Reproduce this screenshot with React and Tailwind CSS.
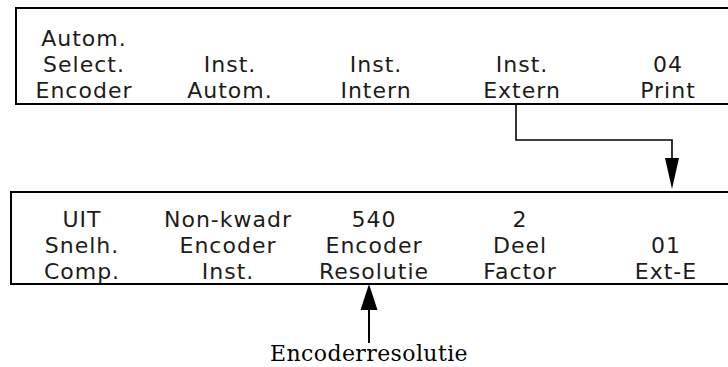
import React from "react";

const top = [
  ["Autom.", "Select.", "Encoder"],
  ["", "Inst.", "Autom."],
  ["", "Inst.", "Intern"],
  ["", "Inst.", "Extern"],
  ["", "04", "Print"],
];

const bottom = [
  ["UIT", "Snelh.", "Comp."],
  ["Non-kwadr", "Encoder", "Inst."],
  ["540", "Encoder", "Resolutie"],
  ["2", "Deel", "Factor"],
  ["", "01", "Ext-E"],
];

function Cols({ data }) {
  return data.map((col, i) => (
    <div key={i} className="flex flex-col">
      {col.map((t, j) => (
        <span key={j} className="whitespace-nowrap">
          {t === "" ? "\u00a0" : t}
        </span>
      ))}
    </div>
  ));
}

export default function App() {
  return (
    <div className="w-[728px] h-[367px] overflow-hidden bg-white">
      <div className="mt-[7px] ml-[15px] border-t-2 border-l-2 border-b-2 border-black pt-[17px]">
        <div className="-mb-px -ml-[6px] grid grid-cols-[repeat(5,146px)] text-center text-[22px] leading-[26px] tracking-[1px] text-[#1c1c1c] font-['DejaVu_Sans',sans-serif]">
          <Cols data={top} />
        </div>
      </div>

      <svg className="block" width="728" height="86" viewBox="0 0 728 86">
        <path d="M516 0 V35 H672 V55" fill="none" stroke="#000" strokeWidth="1.6" />
        <polygon points="665,53 679,53 672,84" fill="#000" />
      </svg>

      <div className="ml-[10px] border-t-2 border-l-2 border-b-2 border-black pt-[14px]">
        <div className="-mb-[2px] -ml-[3px] grid grid-cols-[repeat(5,146px)] text-center text-[22px] leading-[26px] tracking-[1px] text-[#1c1c1c] font-['DejaVu_Sans',sans-serif]">
          <Cols data={bottom} />
        </div>
      </div>

      <div className="-mt-px ml-[269px] w-[200px] flex flex-col items-center">
        <svg className="block" width="20" height="59" viewBox="0 0 20 59">
          <polygon points="1.5,26 18.5,26 10,0" fill="#000" />
          <line x1="10" y1="25" x2="10" y2="59" stroke="#000" strokeWidth="2" />
        </svg>
        <span className="whitespace-nowrap text-[22px] leading-[22px] tracking-[0.4px] text-black font-['DejaVu_Serif',serif]">
          Encoderresolutie
        </span>
      </div>
    </div>
  );
}
